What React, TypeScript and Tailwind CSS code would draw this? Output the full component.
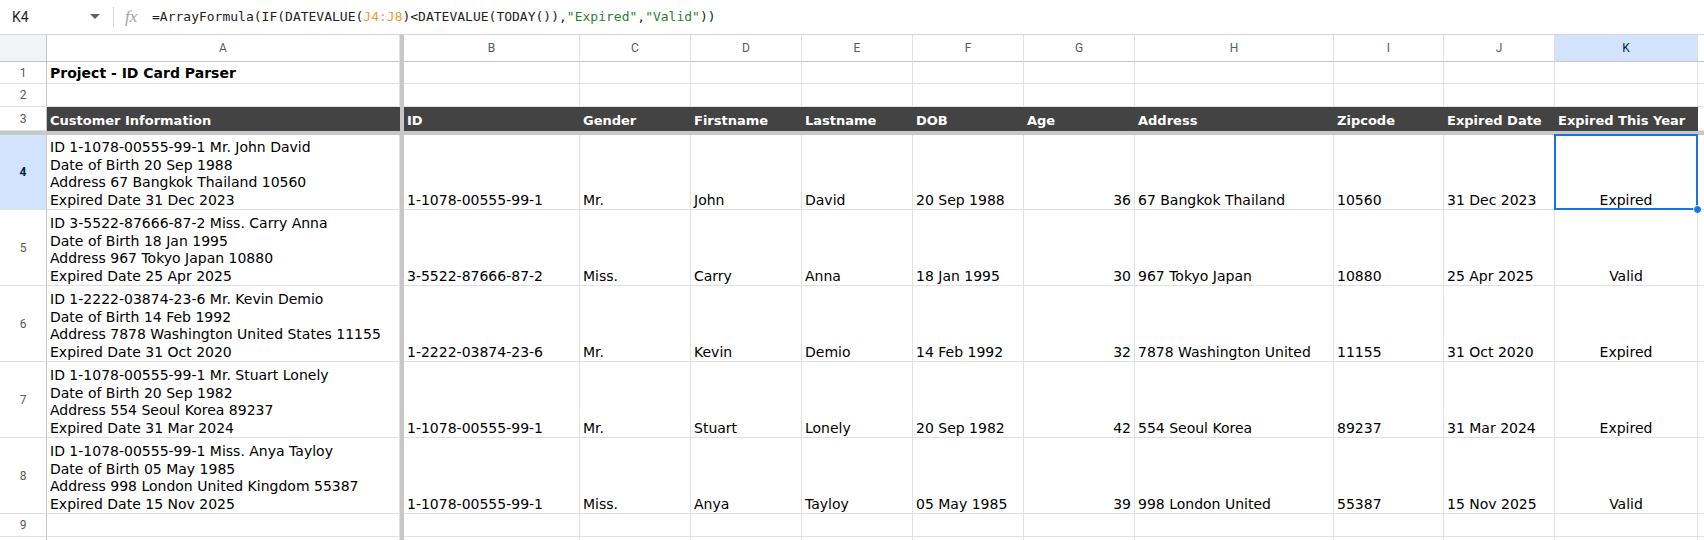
import React from 'react'

type Person = {
  id: string
  title: string
  first: string
  last: string
  dob: string
  age: number
  fullAddr: string
  addr: string
  zip: string
  exp: string
  status: string
}

const people: Person[] = [
  { id: '1-1078-00555-99-1', title: 'Mr.', first: 'John', last: 'David', dob: '20 Sep 1988', age: 36, fullAddr: '67 Bangkok Thailand', addr: '67 Bangkok Thailand', zip: '10560', exp: '31 Dec 2023', status: 'Expired' },
  { id: '3-5522-87666-87-2', title: 'Miss.', first: 'Carry', last: 'Anna', dob: '18 Jan 1995', age: 30, fullAddr: '967 Tokyo Japan', addr: '967 Tokyo Japan', zip: '10880', exp: '25 Apr 2025', status: 'Valid' },
  { id: '1-2222-03874-23-6', title: 'Mr.', first: 'Kevin', last: 'Demio', dob: '14 Feb 1992', age: 32, fullAddr: '7878 Washington United States', addr: '7878 Washington United', zip: '11155', exp: '31 Oct 2020', status: 'Expired' },
  { id: '1-1078-00555-99-1', title: 'Mr.', first: 'Stuart', last: 'Lonely', dob: '20 Sep 1982', age: 42, fullAddr: '554 Seoul Korea', addr: '554 Seoul Korea', zip: '89237', exp: '31 Mar 2024', status: 'Expired' },
  { id: '1-1078-00555-99-1', title: 'Miss.', first: 'Anya', last: 'Tayloy', dob: '05 May 1985', age: 39, fullAddr: '998 London United Kingdom', addr: '998 London United', zip: '55387', exp: '15 Nov 2025', status: 'Valid' }
]

const letters = ['A', 'B', 'C', 'D', 'E', 'F', 'G', 'H', 'I', 'J', 'K']
const headers = ['ID', 'Gender', 'Firstname', 'Lastname', 'DOB', 'Age', 'Address', 'Zipcode', 'Expired Date', 'Expired This Year']

const body = "font-['DejaVu_Sans',sans-serif]"
const bold = "font-['DejaVu_Sans',sans-serif] font-bold text-[13px]"
const headFont = "font-['Roboto',sans-serif]"

const cell = 'flex items-end overflow-hidden whitespace-nowrap border-r border-b border-[#e1e1e1] px-[3px] leading-[17.5px] text-[14px] text-black'
const rowHead = `flex items-center justify-center border-r border-b border-r-[#c4c7c5] border-b-[#e1e1e1] text-[12px] text-[#575a5e] ${headFont}`
const divider = 'bg-[#c7c7c7]'

function FormulaBar() {
  return (
    <div className="flex h-[35px] items-center border-b border-[#d5d5d5] bg-white">
      <div className={`w-[82px] pl-[12px] text-[14px] text-[#1f1f1f] ${headFont}`}>K4</div>
      <svg width="10" height="6" viewBox="0 0 10 6" className="ml-[8px]">
        <path d="M0 0h10L5 5z" fill="#5f6368" />
      </svg>
      <div className="ml-[13px] h-[20px] w-px bg-[#d5d5d5]" />
      <div className="ml-[11px] w-[27px] font-['Liberation_Serif',serif] text-[17px] italic text-[#a0a4a8]">fx</div>
      <div className="font-['DejaVu_Sans_Mono',monospace] text-[13px] text-[#222]">
        =ArrayFormula(IF(DATEVALUE(<span className="text-[#f29b34]">J4:J8</span>)&lt;DATEVALUE(TODAY()),
        <span className="text-[#2e7d32]">"Expired"</span>,<span className="text-[#2e7d32]">"Valid"</span>))
      </div>
    </div>
  )
}

export default function App() {
  return (
    <div className="h-[540px] w-[1704px] overflow-hidden bg-white">
      <FormulaBar />
      <div className="grid grid-cols-[47px_353px_4px_176px_111px_111px_111px_111px_111px_199px_110px_111px_143px_1fr] grid-rows-[27px_22px_23px_24px_4px_75px_76px_76px_76px_76px_23px_20px]">
        {/* column letters */}
        <div className="border-r border-b border-[#c4c7c5] bg-[#f1f3f4]" />
        {letters.map((l, i) => (
          <React.Fragment key={l}>
            <div
              className={`flex items-center justify-center border-r border-b border-b-[#c4c7c5] border-r-[#e1e1e1] text-[12px] ${headFont} ${
                l === 'K' ? 'bg-[#d3e3fd] text-[#041e49]' : 'bg-white text-[#575a5e]'
              }`}
            >
              {l}
            </div>
            {i === 0 && <div className={divider} />}
          </React.Fragment>
        ))}
        <div className="border-b border-[#c4c7c5]" />

        {/* row 1 */}
        <div className={rowHead}>1</div>
        <div className={`${cell} pb-px ${bold}`}>Project - ID Card Parser</div>
        <div className={divider} />
        {Array.from({ length: 11 }).map((_, i) => (
          <div key={i} className={cell} />
        ))}

        {/* row 2 */}
        <div className={rowHead}>2</div>
        <div className={cell} />
        <div className={divider} />
        {Array.from({ length: 11 }).map((_, i) => (
          <div key={i} className={cell} />
        ))}

        {/* row 3 */}
        <div className={rowHead}>3</div>
        <div className={`flex items-end bg-[#434343] px-[3px] pb-[2px] leading-[17.5px] text-white ${bold}`}>Customer Information</div>
        <div className={divider} />
        {headers.map((h) => (
          <div key={h} className={`flex items-end whitespace-nowrap bg-[#434343] px-[3px] pb-[2px] leading-[17.5px] text-white ${bold}`}>
            {h}
          </div>
        ))}
        <div className="border-b border-[#e1e1e1]" />

        {/* frozen line */}
        <div className={`col-span-full ${divider}`} />

        {people.map((p, r) => {
          const selected = r === 0
          return (
            <React.Fragment key={r}>
              <div
                className={
                  selected
                    ? `flex items-center justify-center border-r border-b border-r-[#c4c7c5] border-b-[#e1e1e1] bg-[#d3e3fd] text-[12px] font-bold text-[#041e49] ${headFont}`
                    : rowHead
                }
              >
                {r + 4}
              </div>
              <div className={`${cell} flex-col items-start justify-end ${body}`}>
                <div>
                  ID {p.id} {p.title} {p.first} {p.last}
                </div>
                <div>Date of Birth {p.dob}</div>
                <div>
                  Address {p.fullAddr} {p.zip}
                </div>
                <div>Expired Date {p.exp}</div>
              </div>
              <div className={divider} />
              <div className={`${cell} ${body}`}>{p.id}</div>
              <div className={`${cell} ${body}`}>{p.title}</div>
              <div className={`${cell} ${body}`}>{p.first}</div>
              <div className={`${cell} ${body}`}>{p.last}</div>
              <div className={`${cell} ${body}`}>{p.dob}</div>
              <div className={`${cell} justify-end ${body}`}>{p.age}</div>
              <div className={`${cell} ${body}`}>{p.addr}</div>
              <div className={`${cell} ${body}`}>{p.zip}</div>
              <div className={`${cell} ${body}`}>{p.exp}</div>
              <div className={`${cell} relative justify-center ${body} ${selected ? 'z-10 overflow-visible' : ''}`}>
                {p.status}
                {selected && (
                  <>
                    <div className="absolute inset-[-1px] border-2 border-[#1a73e8]" />
                    <div className="absolute right-[-5px] bottom-[-5px] h-[9px] w-[9px] rounded-full border border-white bg-[#1a73e8]" />
                  </>
                )}
              </div>
              <div className="border-b border-[#e1e1e1]" />
            </React.Fragment>
          )
        })}

        {/* rows 9-10 */}
        {['9', ''].map((n, k) => (
          <React.Fragment key={k}>
            <div className={rowHead}>{n}</div>
            <div className={cell} />
            <div className={divider} />
            {Array.from({ length: 10 }).map((_, i) => (
              <div key={i} className={cell} />
            ))}
            <div className="border-b border-[#e1e1e1]" />
          </React.Fragment>
        ))}
      </div>
    </div>
  )
}
